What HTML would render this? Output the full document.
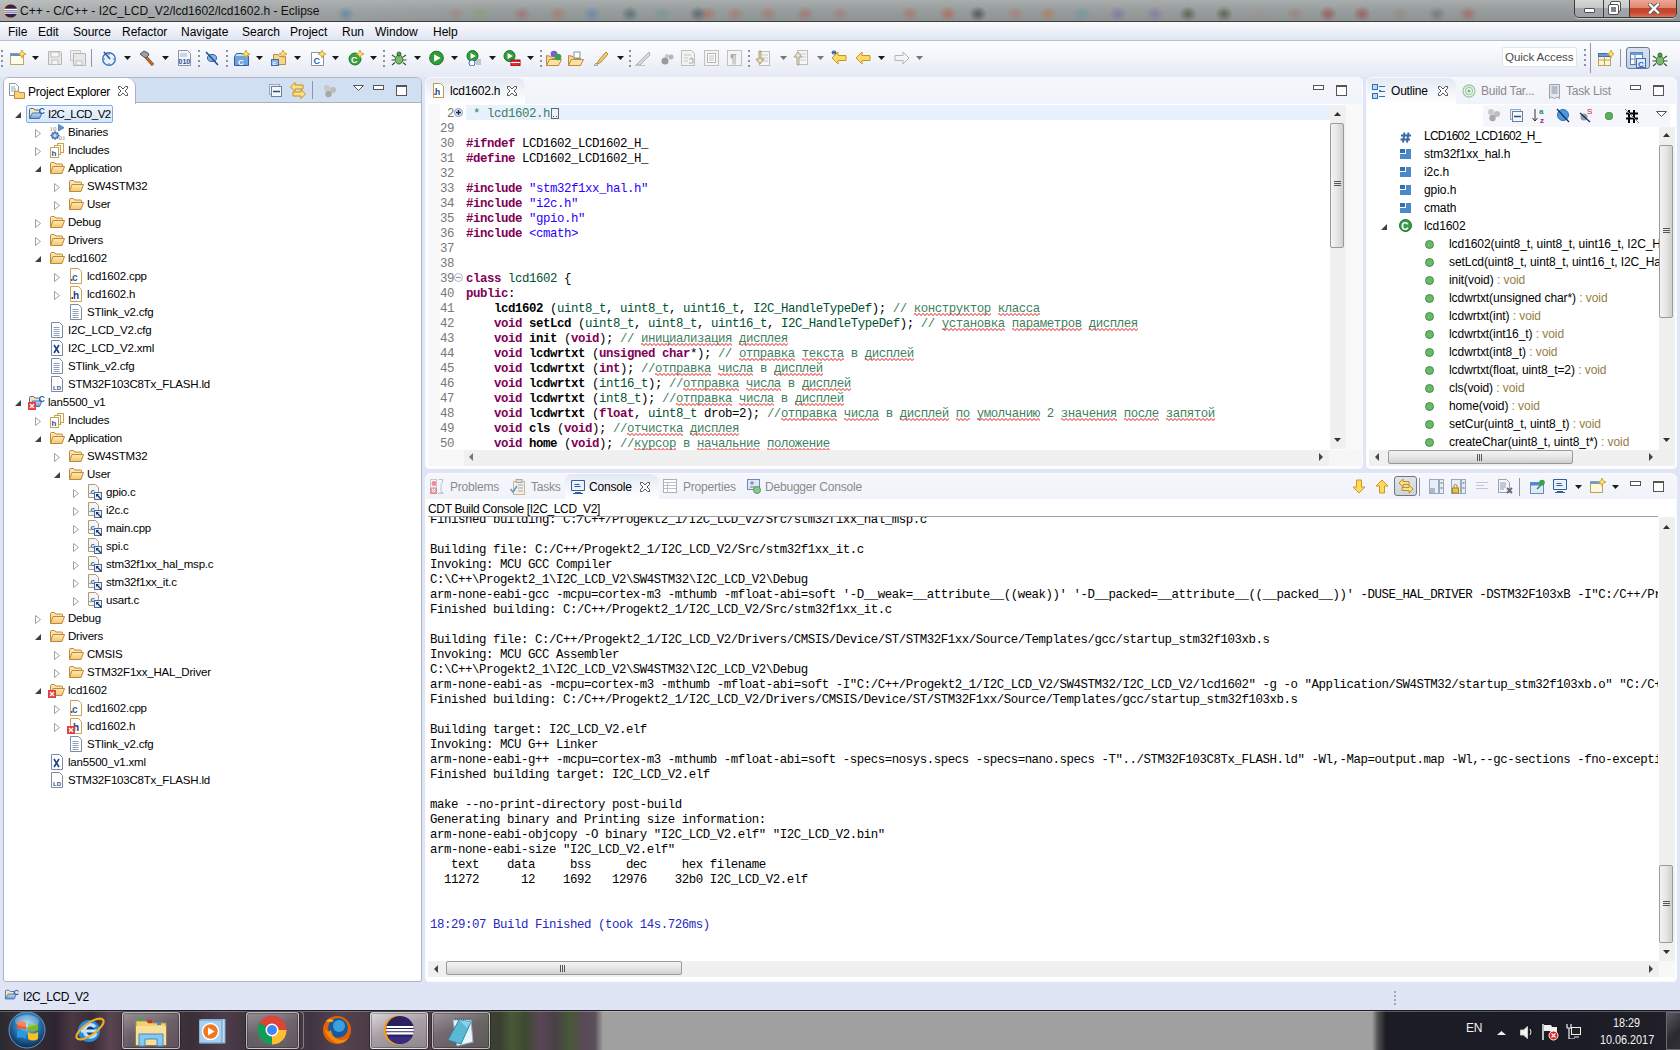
<!DOCTYPE html><html><head><meta charset="utf-8"><style>
*{box-sizing:border-box}
html,body{margin:0;padding:0}
body{width:1680px;height:1050px;position:relative;overflow:hidden;background:#e0e5f6;font-family:"Liberation Sans",sans-serif;font-size:12px;color:#000}
.a{position:absolute}
.t{position:absolute;white-space:pre;line-height:14px}
.ui{font-size:11.5px;letter-spacing:-0.2px}
.mono{font-family:"Liberation Mono",monospace;white-space:pre}
#menu span{position:absolute;top:3px;font-size:12px}
.panel{position:absolute;background:#fff;border:1px solid #a9b0be;border-radius:6px 6px 0 0;overflow:hidden}
.sbv{position:absolute;width:16px;background:#f0f0f0}
.sbh{position:absolute;height:16px;background:#f0f0f0}
.thumbv{position:absolute;left:1px;width:14px;border:1px solid #9a9a9a;border-radius:2px;background:linear-gradient(90deg,#f4f4f4,#e6e6e6 50%,#cfcfcf)}
.thumbh{position:absolute;top:1px;height:14px;border:1px solid #9a9a9a;border-radius:2px;background:linear-gradient(#f4f4f4,#e6e6e6 50%,#cfcfcf)}
.kw{color:#7f0055;font-weight:bold}
.cm{color:#3f7f5f}
.st{color:#2a00ff}
.ty{color:#005032}
.fn{font-weight:bold}
.sq{background:linear-gradient(45deg,transparent 30%,#f49090 30%,#f49090 62%,transparent 62%) 0 100%/4px 3px repeat-x,linear-gradient(-45deg,transparent 30%,#f49090 30%,#f49090 62%,transparent 62%) 2px 100%/4px 3px repeat-x}
</style></head><body>
<svg width="0" height="0" style="position:absolute">
<defs>
<linearGradient id="gFold" x1="0" y1="0" x2="0" y2="1"><stop offset="0" stop-color="#fdebb8"/><stop offset="1" stop-color="#f2c66c"/></linearGradient>
<linearGradient id="gBlue" x1="0" y1="0" x2="0" y2="1"><stop offset="0" stop-color="#c6dcf6"/><stop offset="1" stop-color="#6d9bd8"/></linearGradient>
<symbol id="folder" viewBox="0 0 16 16">
 <path d="M1.5 13.5 v-10 q0 -1 1 -1 h3 l1.5 1.5 h5.5 q1 0 1 1 v1.5" fill="#fbe3a6" stroke="#c0883a"/>
 <path d="M1.5 13.5 l2.5 -7 h11.5 l-2.5 7z" fill="url(#gFold)" stroke="#c0883a" stroke-linejoin="round"/>
</symbol>
<symbol id="projfolder" viewBox="0 0 16 16">
 <path d="M0.5 12.5 v-9 q0 -1 1 -1 h3 l1.5 1.5 h4.5 v3" fill="#fbe6a8" stroke="#3d6fb5"/>
 <path d="M0.5 12.5 l3 -5.5 h9.5 l-2.5 5.5z" fill="url(#gBlue)" stroke="#3d6fb5" stroke-linejoin="round"/>
 <text x="9.8" y="7.5" font-family="Liberation Sans" font-weight="bold" font-size="8.5" fill="#2b5fa8">C</text>
</symbol>
<symbol id="filec" viewBox="0 0 16 16">
 <path d="M2.5 0.5 h8 l3 3 v12 h-11z" fill="#fff" stroke="#c9a34f"/>
 <text x="4" y="13" font-family="Liberation Sans" font-weight="bold" font-size="10" fill="#2f5fa8">c</text>
 <rect x="3" y="11" width="1.5" height="2" fill="#2f5fa8"/>
</symbol>
<symbol id="fileh" viewBox="0 0 16 16">
 <path d="M2.5 0.5 h8 l3 3 v12 h-11z" fill="#fff" stroke="#c9a34f"/>
 <text x="5" y="13" font-family="Liberation Sans" font-weight="bold" font-size="10" fill="#1f3f7a">h</text>
 <rect x="3.5" y="11" width="1.5" height="2" fill="#1f3f7a"/>
</symbol>
<symbol id="filetxt" viewBox="0 0 16 16">
 <path d="M2.5 0.5 h8 l3 3 v12 h-11z" fill="#fff" stroke="#7d8aa3"/>
 <path d="M4.5 5.5 h6 M4.5 7.5 h6 M4.5 9.5 h6 M4.5 11.5 h6 M4.5 13.5 h6" stroke="#8fa0bd"/>
</symbol>
<symbol id="filexml" viewBox="0 0 16 16">
 <path d="M2.5 0.5 h8 l3 3 v12 h-11z" fill="#fff" stroke="#7d8aa3"/>
 <path d="M5 5 l5 8 M10 5 l-5 8" stroke="#1b3f8c" stroke-width="1.6"/>
</symbol>
<symbol id="fileld" viewBox="0 0 16 16">
 <path d="M2.5 0.5 h8 l3 3 v12 h-11z" fill="#fff" stroke="#7d8aa3"/>
 <text x="4" y="14" font-family="Liberation Sans" font-weight="bold" font-size="6" fill="#2f4f8a">LD</text>
</symbol>
<symbol id="filelink" viewBox="0 0 16 16">
 <path d="M1.5 0.5 h7 l3 3 v10 h-10z" fill="#f2f6fb" stroke="#b39a68"/>
 <text x="3.5" y="10" font-family="Liberation Sans" font-weight="bold" font-size="8" fill="#3a6aa8">c</text>
 <rect x="2.5" y="9" width="1" height="1" fill="#2a4a7a"/>
 <rect x="7.5" y="8.5" width="7" height="7" fill="#e4ecf6" stroke="#4a6a9a"/>
 <path d="M9.5 10.5 L14 15" stroke="#1a3060" stroke-width="1.2"/>
 <path d="M9 10 h3 l-3 3z" fill="#1a3060"/>
</symbol>
<symbol id="binaries" viewBox="0 0 16 16">
 <text x="0.5" y="6.5" font-family="Liberation Serif" font-size="7" fill="#8a8a8a">10</text>
 <path d="M9.5 0.5 l5.5 3.2 l-5.5 3.2z" fill="#5c94d6" stroke="#3a6fb8" stroke-width="0.8"/>
 <path d="M6 7.5 l1 1.6 l1.8 -0.4 l0 1.8 l1.6 1 l-1.6 1 l0 1.8 l-1.8 -0.4 l-1 1.6 l-1 -1.6 l-1.8 0.4 l0 -1.8 l-1.6 -1 l1.6 -1 l0 -1.8 l1.8 0.4z" fill="#6f9fd4" stroke="#2f5a90" stroke-width="0.9"/>
 <circle cx="6" cy="11.5" r="1.5" fill="#cfe0f4"/>
 <text x="9.5" y="16" font-family="Liberation Serif" font-size="7" fill="#8a8a8a">01</text>
</symbol>
<symbol id="includes" viewBox="0 0 16 16">
 <rect x="8.5" y="1.5" width="6" height="9" fill="#fff" stroke="#c9a34f"/>
 <rect x="5.5" y="3.5" width="6" height="9" fill="#fff" stroke="#c9a34f"/>
 <rect x="1.5" y="5.5" width="8" height="10" fill="#fff" stroke="#c9a34f"/>
 <text x="2.5" y="14" font-family="Liberation Sans" font-weight="bold" font-size="8" fill="#1f4f9a">h</text>
</symbol>
<symbol id="errx" viewBox="0 0 8 8">
 <rect x="0" y="0" width="8" height="8" fill="#e04040"/>
 <path d="M2 2 l4 4 M6 2 l-4 4" stroke="#fff" stroke-width="1.3"/>
</symbol>
</defs></svg>
<div class="a" style="left:0;top:0;width:1680px;height:22px;background:radial-gradient(ellipse 9px 8px at 346px 14px,rgba(70,120,170,.55),transparent),radial-gradient(ellipse 9px 8px at 455px 14px,rgba(170,110,110,.35),transparent),radial-gradient(ellipse 9px 8px at 480px 14px,rgba(120,170,80,.45),transparent),radial-gradient(ellipse 9px 8px at 522px 14px,rgba(180,80,80,.45),transparent),radial-gradient(ellipse 9px 8px at 558px 14px,rgba(190,100,70,.45),transparent),radial-gradient(ellipse 9px 8px at 592px 14px,rgba(70,120,190,.5),transparent),radial-gradient(ellipse 9px 8px at 630px 14px,rgba(40,80,90,.5),transparent),radial-gradient(ellipse 9px 8px at 662px 14px,rgba(90,150,150,.4),transparent),radial-gradient(ellipse 9px 8px at 698px 14px,rgba(50,70,90,.55),transparent),radial-gradient(ellipse 9px 8px at 708px 14px,rgba(190,90,60,.45),transparent),radial-gradient(ellipse 9px 8px at 735px 14px,rgba(190,90,80,.4),transparent),radial-gradient(ellipse 9px 8px at 768px 14px,rgba(190,90,80,.4),transparent),radial-gradient(ellipse 9px 8px at 805px 14px,rgba(180,80,70,.4),transparent),radial-gradient(ellipse 9px 8px at 840px 14px,rgba(180,90,80,.35),transparent),radial-gradient(ellipse 9px 8px at 910px 14px,rgba(190,90,70,.45),transparent),radial-gradient(ellipse 9px 8px at 948px 14px,rgba(190,90,60,.6),transparent),radial-gradient(ellipse 9px 8px at 978px 14px,rgba(50,50,50,.6),transparent),radial-gradient(ellipse 9px 8px at 1015px 14px,rgba(190,100,90,.4),transparent),radial-gradient(ellipse 9px 8px at 1048px 14px,rgba(190,110,60,.5),transparent),radial-gradient(ellipse 9px 8px at 1082px 14px,rgba(90,150,170,.45),transparent),radial-gradient(ellipse 9px 8px at 1118px 14px,rgba(120,100,170,.55),transparent),radial-gradient(ellipse 9px 8px at 1155px 14px,rgba(120,100,170,.5),transparent),radial-gradient(ellipse 9px 8px at 1188px 14px,rgba(60,70,40,.6),transparent),radial-gradient(ellipse 9px 8px at 1224px 14px,rgba(60,70,40,.6),transparent),radial-gradient(ellipse 9px 8px at 1260px 14px,rgba(170,140,140,.3),transparent),radial-gradient(ellipse 9px 8px at 1295px 14px,rgba(170,100,90,.35),transparent),radial-gradient(ellipse 9px 8px at 1328px 14px,rgba(160,60,60,.6),transparent),radial-gradient(ellipse 9px 8px at 1362px 14px,rgba(160,60,60,.6),transparent),radial-gradient(ellipse 9px 8px at 1400px 14px,rgba(150,120,100,.3),transparent),radial-gradient(ellipse 9px 8px at 1437px 14px,rgba(80,80,80,.4),transparent),radial-gradient(ellipse 9px 8px at 1468px 14px,rgba(170,80,70,.55),transparent),linear-gradient(90deg,rgba(255,255,255,0.22),rgba(255,255,255,0.08) 300px,transparent 500px),linear-gradient(#a8acac,#979c9c 50%,#8e9393);border-bottom:1px solid #3a3d3d;box-shadow:0 1px 0 #fff"></div><svg class="a" style="left:2px;top:3px" width="16" height="16" viewBox="0 0 16 16"><circle cx="8.3" cy="8" r="7" fill="#f7941d"/><circle cx="8.8" cy="8" r="6.6" fill="#2c2255"/><path d="M2.2 6.3h13.2M2 8.2h13.6M2.2 10.1h13.2" stroke="#fff" stroke-width="1.2"/></svg><div class="t" style="left:20px;top:3.5px;font-size:12px;color:#111">C++ - C/C++ - I2C_LCD_V2/lcd1602/lcd1602.h - Eclipse</div><div class="a" style="left:1574px;top:0;width:103px;height:18px;border:1px solid #3a3c40;border-top:none;border-radius:0 0 5px 5px;overflow:hidden;background:linear-gradient(#d6d8d8,#c8caca 44%,#a4a8ac 45%,#9ea2a8 100%);box-shadow:0 1px 0 rgba(255,255,255,0.5)"><div class="a" style="left:28px;top:0;width:1px;height:18px;background:#3a3c40"></div><div class="a" style="left:54px;top:0;width:1px;height:18px;background:#3a3c40"></div><div class="a" style="left:55px;top:0;width:48px;height:18px;background:linear-gradient(#eca898,#e08670 44%,#c4432a 45%,#c84a30 70%,#dc7a62)"></div><div class="a" style="left:9px;top:8px;width:11px;height:5px;background:#fff;border:1px solid #505050;border-radius:1px"></div><div class="a" style="left:36px;top:2px;width:9px;height:9px;border:2px solid #fff;outline:1px solid #505050;border-radius:1px"></div><div class="a" style="left:34px;top:5px;width:9px;height:9px;border:2px solid #fff;background:#808488;outline:1px solid #505050;border-radius:1px"></div><svg class="a" style="left:73px;top:3px" width="12" height="11"><path d="M2 1.5 L10 9.5 M10 1.5 L2 9.5" stroke="#5a5a5a" stroke-width="4.2" stroke-linecap="square"/><path d="M2 1.5 L10 9.5 M10 1.5 L2 9.5" stroke="#fff" stroke-width="2.4" stroke-linecap="square"/></svg></div><div id="menu" class="a" style="left:0;top:22px;width:1680px;height:19px;background:linear-gradient(#fafbfd,#eef1f8 45%,#dfe5f2);border-bottom:1px solid #b7bfcf"><span style="left:8px">File</span><span style="left:38px">Edit</span><span style="left:73px">Source</span><span style="left:122px">Refactor</span><span style="left:181px">Navigate</span><span style="left:242px">Search</span><span style="left:290px">Project</span><span style="left:342px">Run</span><span style="left:375px">Window</span><span style="left:433px">Help</span></div><div class="a" style="left:0;top:41px;width:1680px;height:36px;background:linear-gradient(#fcfdfe,#f2f4fa 50%,#e4e9f5)"></div><svg class="a" style="left:1px;top:49px" width="2" height="18" viewBox="0 0 2 18"><path d="M1 1v2M1 6v2M1 11v2M1 16v2" stroke="#8a93a6" stroke-width="2"/></svg><svg class="a" style="left:10px;top:50px" width="16" height="16" viewBox="0 0 16 16"><rect x="0.5" y="3.5" width="13" height="11" fill="#fffbe8" stroke="#bfa56a"/><rect x="0.5" y="3.5" width="13" height="2.5" fill="#5a8fd0"/><path d="M12 0 l1.2 2.8 l2.8 1.2 l-2.8 1.2 l-1.2 2.8 l-1.2 -2.8 l-2.8 -1.2 l2.8 -1.2z" fill="#ffe27a" stroke="#c79a20" stroke-width="0.8"/></svg><svg class="a" style="left:32px;top:56px" width="7" height="4" viewBox="0 0 7 4"><path d="M0 0h7l-3.5 4z" fill="#1a1a1a"/></svg><svg class="a" style="left:47px;top:50px" width="16" height="16" viewBox="0 0 16 16"><path d="M1.5 1.5h12l1 1v12h-13z" fill="#e8e8e8" stroke="#b5b5b5"/><rect x="4" y="2" width="8" height="5" fill="#f6f6f6" stroke="#c0c0c0"/><rect x="5" y="10" width="6" height="4.5" fill="#f6f6f6" stroke="#c0c0c0"/></svg><svg class="a" style="left:70px;top:50px" width="16" height="16" viewBox="0 0 16 16"><path d="M0.5 0.5h10v10h-10z" fill="#eee" stroke="#c5c5c5"/><path d="M3.5 3.5h12v12h-12z" fill="#e8e8e8" stroke="#b5b5b5"/><rect x="6" y="11" width="6" height="4" fill="#f6f6f6" stroke="#c0c0c0"/></svg><div class="a" style="left:91px;top:49px;width:1px;height:18px;background:#8f97a6"></div><svg class="a" style="left:101px;top:50px" width="16" height="16" viewBox="0 0 16 16"><circle cx="8" cy="9" r="6.3" fill="#eaf2fb" stroke="#3a78b8" stroke-width="1.4"/><path d="M8 3.5v1.5M8 13v1.5M2.5 9h1.5M12 9h1.5" stroke="#3a78b8"/><path d="M3 2 L9 9" stroke="#3a5f9a" stroke-width="1.8"/></svg><svg class="a" style="left:124px;top:56px" width="7" height="4" viewBox="0 0 7 4"><path d="M0 0h7l-3.5 4z" fill="#1a1a1a"/></svg><svg class="a" style="left:139px;top:50px" width="16" height="16" viewBox="0 0 16 16"><path d="M6 6 L14 15" stroke="#8a4a1c" stroke-width="3.2"/><path d="M6 6 L14 15" stroke="#c8783a" stroke-width="1.4"/><path d="M1 4 l4 -3 l4 2 l1 2 l-3 3 l-2 -1z" fill="#9aa0a8" stroke="#555"/></svg><svg class="a" style="left:162px;top:56px" width="7" height="4" viewBox="0 0 7 4"><path d="M0 0h7l-3.5 4z" fill="#1a1a1a"/></svg><svg class="a" style="left:178px;top:50px" width="14" height="16" viewBox="0 0 14 16"><path d="M0.5 0.5h9l3 3v12h-12z" fill="#f4f6fb" stroke="#8a93a6"/><text x="0.5" y="14" font-size="7" font-family="Liberation Sans" font-weight="bold" fill="#2a4f8a">010</text><path d="M2 4h7M2 6h7" stroke="#9fb3d0"/></svg><svg class="a" style="left:198px;top:49px" width="2" height="18" viewBox="0 0 2 18"><path d="M1 1v2M1 6v2M1 11v2M1 16v2" stroke="#8a93a6" stroke-width="2"/></svg><svg class="a" style="left:205px;top:50px" width="14" height="16" viewBox="0 0 14 16"><ellipse cx="7" cy="8" rx="4.5" ry="3.5" fill="#8fb4e0" stroke="#2a5fa0"/><path d="M1 2 L13 15" stroke="#1e4f90" stroke-width="1.6"/></svg><svg class="a" style="left:226px;top:49px" width="2" height="18" viewBox="0 0 2 18"><path d="M1 1v2M1 6v2M1 11v2M1 16v2" stroke="#8a93a6" stroke-width="2"/></svg><svg class="a" style="left:234px;top:50px" width="16" height="16" viewBox="0 0 16 16"><path d="M0.5 6.5h14v9h-14z" fill="#6fa2e0" stroke="#2b5fa8"/><path d="M0.5 6.5l2 -3h10l2 3" fill="#c9ddf6" stroke="#2b5fa8"/><text x="4" y="14.5" font-size="8" font-weight="bold" font-family="Liberation Sans" fill="#fff">C</text><path d="M12 0 l1.2 2.8 l2.8 1.2 l-2.8 1.2 l-1.2 2.8 l-1.2 -2.8 l-2.8 -1.2 l2.8 -1.2z" fill="#ffe27a" stroke="#c79a20" stroke-width="0.8"/></svg><svg class="a" style="left:256px;top:56px" width="7" height="4" viewBox="0 0 7 4"><path d="M0 0h7l-3.5 4z" fill="#1a1a1a"/></svg><svg class="a" style="left:271px;top:50px" width="16" height="16" viewBox="0 0 16 16"><path d="M2.5 4.5v10h12v-8h-6l-1.5 -2z" fill="#f5d68c" stroke="#c08a3c"/><rect x="0.5" y="9.5" width="7" height="6" fill="#8fb6e6" stroke="#3a6fb8"/><text x="1.5" y="15" font-size="6" font-weight="bold" font-family="Liberation Sans" fill="#fff">c</text><path d="M12 0 l1.2 2.8 l2.8 1.2 l-2.8 1.2 l-1.2 2.8 l-1.2 -2.8 l-2.8 -1.2 l2.8 -1.2z" fill="#ffe27a" stroke="#c79a20" stroke-width="0.8"/></svg><svg class="a" style="left:294px;top:56px" width="7" height="4" viewBox="0 0 7 4"><path d="M0 0h7l-3.5 4z" fill="#1a1a1a"/></svg><svg class="a" style="left:311px;top:50px" width="16" height="16" viewBox="0 0 16 16"><path d="M0.5 2.5h9l3 3v10h-12z" fill="#fff" stroke="#8a93a6"/><text x="2.5" y="13.5" font-size="9" font-weight="bold" font-family="Liberation Sans" fill="#2b5fb8">C</text><path d="M11 0 l1.2 2.8 l2.8 1.2 l-2.8 1.2 l-1.2 2.8 l-1.2 -2.8 l-2.8 -1.2 l2.8 -1.2z" fill="#ffe27a" stroke="#c79a20" stroke-width="0.8"/></svg><svg class="a" style="left:332px;top:56px" width="7" height="4" viewBox="0 0 7 4"><path d="M0 0h7l-3.5 4z" fill="#1a1a1a"/></svg><svg class="a" style="left:348px;top:50px" width="16" height="16" viewBox="0 0 16 16"><circle cx="7" cy="9" r="6" fill="#3aa040" stroke="#1f7a2a"/><text x="3" y="13" font-size="9" font-weight="bold" font-family="Liberation Sans" fill="#fff">C</text><path d="M12 0 l1.2 2.8 l2.8 1.2 l-2.8 1.2 l-1.2 2.8 l-1.2 -2.8 l-2.8 -1.2 l2.8 -1.2z" fill="#ffe27a" stroke="#c79a20" stroke-width="0.8"/></svg><svg class="a" style="left:370px;top:56px" width="7" height="4" viewBox="0 0 7 4"><path d="M0 0h7l-3.5 4z" fill="#1a1a1a"/></svg><svg class="a" style="left:383px;top:49px" width="2" height="18" viewBox="0 0 2 18"><path d="M1 1v2M1 6v2M1 11v2M1 16v2" stroke="#8a93a6" stroke-width="2"/></svg><svg class="a" style="left:391px;top:50px" width="16" height="16" viewBox="0 0 16 16"><ellipse cx="8" cy="9.5" rx="3.8" ry="4.5" fill="#7cb870" stroke="#2f6a2a"/><circle cx="8" cy="4" r="2" fill="#5a9a50" stroke="#2f6a2a"/><path d="M4 7l-3 -2M4 10h-3.5M4 12.5l-3 2.5M12 7l3 -2M12 10h3.5M12 12.5l3 2.5" stroke="#2f5a2a" stroke-width="1.1"/></svg><svg class="a" style="left:414px;top:56px" width="7" height="4" viewBox="0 0 7 4"><path d="M0 0h7l-3.5 4z" fill="#1a1a1a"/></svg><svg class="a" style="left:429px;top:50px" width="16" height="16" viewBox="0 0 16 16"><circle cx="7.5" cy="8" r="6.8" fill="#2e9e3a" stroke="#1d6e26"/><path d="M5.12 4.26 L11.58 8 L5.12 11.74z" fill="#fff"/></svg><svg class="a" style="left:451px;top:56px" width="7" height="4" viewBox="0 0 7 4"><path d="M0 0h7l-3.5 4z" fill="#1a1a1a"/></svg><svg class="a" style="left:466px;top:50px" width="16" height="16" viewBox="0 0 16 16"><circle cx="6.5" cy="6" r="5.5" fill="#2e9e3a" stroke="#1d6e26"/><path d="M4.575 2.9749999999999996 L9.8 6 L4.575 9.025z" fill="#fff"/><circle cx="6" cy="13" r="3" fill="#fff" stroke="#3a6fb8"/><path d="M10 10h5M10 12h5M10 14h5" stroke="#8a9ab0"/></svg><svg class="a" style="left:489px;top:56px" width="7" height="4" viewBox="0 0 7 4"><path d="M0 0h7l-3.5 4z" fill="#1a1a1a"/></svg><svg class="a" style="left:503px;top:50px" width="18" height="16" viewBox="0 0 18 16"><circle cx="6.5" cy="6" r="5.5" fill="#2e9e3a" stroke="#1d6e26"/><path d="M4.575 2.9749999999999996 L9.8 6 L4.575 9.025z" fill="#fff"/><rect x="8" y="10" width="9" height="6" fill="#e03030" stroke="#8a1010"/><path d="M8 12.5h9" stroke="#fff"/></svg><svg class="a" style="left:527px;top:56px" width="7" height="4" viewBox="0 0 7 4"><path d="M0 0h7l-3.5 4z" fill="#1a1a1a"/></svg><svg class="a" style="left:540px;top:49px" width="2" height="18" viewBox="0 0 2 18"><path d="M1 1v2M1 6v2M1 11v2M1 16v2" stroke="#8a93a6" stroke-width="2"/></svg><svg class="a" style="left:546px;top:50px" width="16" height="16" viewBox="0 0 16 16"><path d="M0.5 5.5v10h12v-7h-6l-1.5 -2z" fill="#f5d68c" stroke="#c08a3c"/><path d="M0.5 15.5l3 -6h12l-3 6z" fill="#fbe2a0" stroke="#c08a3c"/><circle cx="8" cy="4" r="3.3" fill="#7a5fc8"/><circle cx="12" cy="7" r="3.3" fill="#3aa050"/></svg><svg class="a" style="left:568px;top:50px" width="16" height="16" viewBox="0 0 16 16"><path d="M0.5 5.5v10h12v-7h-6l-1.5 -2z" fill="#f5d68c" stroke="#c08a3c"/><rect x="6" y="2" width="6" height="6" fill="#fff" stroke="#8a93a6"/><path d="M0.5 15.5l3 -6h12l-3 6z" fill="#fbe2a0" stroke="#c08a3c"/></svg><svg class="a" style="left:593px;top:50px" width="16" height="16" viewBox="0 0 16 16"><path d="M3 15 L6 10 L13 2 L15 4 L8 12z" fill="#f4d070" stroke="#b08830"/><path d="M1 16 L3 13 L5 15z" fill="#fff3c0" stroke="#999"/></svg><svg class="a" style="left:617px;top:56px" width="7" height="4" viewBox="0 0 7 4"><path d="M0 0h7l-3.5 4z" fill="#1a1a1a"/></svg><svg class="a" style="left:629px;top:49px" width="2" height="18" viewBox="0 0 2 18"><path d="M1 1v2M1 6v2M1 11v2M1 16v2" stroke="#8a93a6" stroke-width="2"/></svg><svg class="a" style="left:635px;top:50px" width="16" height="16" viewBox="0 0 16 16"><path d="M1 15 L14 2 L15 5 L5 15z" fill="#d8d8d8" stroke="#b0b0b0"/><path d="M0 15.5h10" stroke="#c0c0c0"/></svg><svg class="a" style="left:660px;top:50px" width="14" height="16" viewBox="0 0 14 16"><circle cx="5" cy="11" r="3.5" fill="#9a9a9a"/><circle cx="11" cy="7" r="2.5" fill="#b5b5b5"/><circle cx="7" cy="6" r="2" fill="#c5c5c5"/></svg><svg class="a" style="left:681px;top:50px" width="16" height="16" viewBox="0 0 16 16"><path d="M0.5 0.5h10l3 3v12h-13z" fill="#f2f2f2" stroke="#bdbdbd"/><path d="M3 5h7M3 8h4M3 11h4" stroke="#c5c5c5"/><path d="M8 9l4 0l-2 -2M12 9v4h-4" stroke="#aaa" fill="none"/></svg><svg class="a" style="left:704px;top:50px" width="16" height="16" viewBox="0 0 16 16"><rect x="0.5" y="0.5" width="14" height="15" fill="#f4f4f4" stroke="#c0c0c0"/><rect x="3.5" y="3.5" width="8" height="9" fill="#fff" stroke="#b5b5b5"/><path d="M5 6h5M5 8h5M5 10h5" stroke="#c0c0c0"/></svg><svg class="a" style="left:727px;top:50px" width="16" height="16" viewBox="0 0 16 16"><rect x="0.5" y="0.5" width="14" height="15" fill="#f4f4f4" stroke="#c0c0c0"/><text x="3" y="13" font-size="12" font-weight="bold" font-family="Liberation Sans" fill="#aaa">¶</text></svg><svg class="a" style="left:748px;top:49px" width="2" height="18" viewBox="0 0 2 18"><path d="M1 1v2M1 6v2M1 11v2M1 16v2" stroke="#8a93a6" stroke-width="2"/></svg><svg class="a" style="left:755px;top:50px" width="16" height="16" viewBox="0 0 16 16"><rect x="4.5" y="1.5" width="10" height="14" fill="#f6f6f6" stroke="#bdbdbd"/><path d="M7 5h6M7 8h6M7 11h6" stroke="#c9c9c9"/><path d="M4 1v8h-3l4 5l4 -5h-3v-8z" fill="#e8dcc0" stroke="#a89a70"/></svg><svg class="a" style="left:780px;top:56px" width="7" height="4" viewBox="0 0 7 4"><path d="M0 0h7l-3.5 4z" fill="#777"/></svg><svg class="a" style="left:793px;top:50px" width="16" height="16" viewBox="0 0 16 16"><rect x="4.5" y="0.5" width="10" height="14" fill="#f6f6f6" stroke="#bdbdbd"/><path d="M7 4h6M7 7h6M7 10h6" stroke="#c9c9c9"/><path d="M4 15v-8h-3l4 -5l4 5h-3v8z" fill="#e8e0d0" stroke="#a8a090"/></svg><svg class="a" style="left:817px;top:56px" width="7" height="4" viewBox="0 0 7 4"><path d="M0 0h7l-3.5 4z" fill="#777"/></svg><svg class="a" style="left:831px;top:50px" width="16" height="16" viewBox="0 0 16 16"><path d="M1 8 L7 2 V5.5 H15 V10.5 H7 V14z" fill="#ffd86a" stroke="#c89a20"/><path d="M3 0v5M0.5 2.5h5M1 1l4 3M5 1l-4 3" stroke="#2a4fa0" stroke-width="0.9"/></svg><svg class="a" style="left:855px;top:50px" width="16" height="16" viewBox="0 0 16 16"><path d="M1 8 L7 2 V5.5 H15 V10.5 H7 V14z" fill="#ffd86a" stroke="#c89a20"/></svg><svg class="a" style="left:878px;top:56px" width="7" height="4" viewBox="0 0 7 4"><path d="M0 0h7l-3.5 4z" fill="#1a1a1a"/></svg><svg class="a" style="left:894px;top:50px" width="16" height="16" viewBox="0 0 16 16"><path d="M15 8 L9 2 V5.5 H1 V10.5 H9 V14z" fill="#f5f5f5" stroke="#b5b5b5"/></svg><svg class="a" style="left:916px;top:56px" width="7" height="4" viewBox="0 0 7 4"><path d="M0 0h7l-3.5 4z" fill="#777"/></svg><div class="a" style="left:1502px;top:47px;width:75px;height:20px;background:#fff;border:1px solid #dfe3ea;border-radius:2px"></div><div class="t" style="left:1505px;top:50px;font-size:11.6px;color:#4a4a4a;letter-spacing:-0.1px">Quick Access</div><svg class="a" style="left:1584px;top:48px" width="2" height="18" viewBox="0 0 2 18"><path d="M1 1v2M1 6v2M1 11v2M1 16v2" stroke="#8a93a6" stroke-width="2"/></svg><div class="a" style="left:1590px;top:43px;width:1px;height:30px;background:#8f97a6"></div><svg class="a" style="left:1598px;top:50px" width="16" height="16" viewBox="0 0 16 16"><rect x="0.5" y="3.5" width="12" height="12" fill="#fff3d0" stroke="#c0a060"/><rect x="0.5" y="3.5" width="12" height="3" fill="#6a9ad8" stroke="#3a6fb8"/><path d="M0.5 10h12M6.5 6.5v9" stroke="#c0a060"/><path d="M13 0 l1.2 2.8 l2.8 1.2 l-2.8 1.2 l-1.2 2.8 l-1.2 -2.8 l-2.8 -1.2 l2.8 -1.2z" fill="#ffe27a" stroke="#c79a20" stroke-width="0.8"/></svg><div class="a" style="left:1620px;top:49px;width:1px;height:18px;background:#8f97a6"></div><div class="a" style="left:1626px;top:47px;width:24px;height:22px;border:1px solid #6a7a90;border-radius:3px;background:linear-gradient(#d8e2f0,#c5d2e6)"></div><svg class="a" style="left:1630px;top:52px" width="16" height="16" viewBox="0 0 16 16"><rect x="0.5" y="0.5" width="12" height="12" fill="#fff" stroke="#5a7ab0"/><rect x="0.5" y="0.5" width="12" height="2.5" fill="#6a9ad8"/><path d="M5 3v9M0.5 7h4" stroke="#5a7ab0"/><rect x="6.5" y="6.5" width="9" height="9" fill="#dfeaf8" stroke="#3a6fb8"/><text x="8" y="14.5" font-size="8" font-weight="bold" font-family="Liberation Sans" fill="#2a5fb0">C</text></svg><svg class="a" style="left:1652px;top:51px" width="16" height="16" viewBox="0 0 16 16"><ellipse cx="8" cy="9.5" rx="3.8" ry="4.5" fill="#7cb870" stroke="#2f6a2a"/><circle cx="8" cy="4" r="2" fill="#5a9a50" stroke="#2f6a2a"/><path d="M4 7l-3 -2M4 10h-3.5M4 12.5l-3 2.5M12 7l3 -2M12 10h3.5M12 12.5l3 2.5" stroke="#2f5a2a" stroke-width="1.1"/></svg><div class="a" style="left:3px;top:77px;width:419px;height:905px;background:#fff;border:1px solid #aeb4c2;border-radius:6px 6px 2px 3px"></div><div class="a" style="left:4px;top:78px;width:417px;height:25px;background:#d0dff1;border-radius:5px 5px 0 0;border-bottom:1px solid #a9b0be"></div><div class="a" style="left:4px;top:78px;width:132px;height:26px;background:#fff;border-radius:5px 9px 0 0;border-right:1px solid #a9b0be"></div><svg class="a" style="left:9px;top:83px" width="16" height="16" viewBox="0 0 16 16"><path d="M0.5 0.5h6l3 3v9h-9z" fill="#fff" stroke="#8a93a6"/><path d="M2 4h4M2 6h5M2 8h5" stroke="#9ab"/><path d="M5.5 8.5v7h10v-6h-5l-1 -1.5z" fill="#f9d27a" stroke="#c08a3c"/></svg><div class="t ui" style="left:28px;top:84.5px;font-size:12px">Project Explorer</div><svg class="a" style="left:117px;top:85px" width="12" height="12" viewBox="0 0 12 12"><path d="M1.5 1.5h2l2.5 2.5l2.5 -2.5h2v2l-2.5 2.5l2.5 2.5v2h-2l-2.5 -2.5l-2.5 2.5h-2v-2l2.5 -2.5l-2.5 -2.5z" fill="#fff" stroke="#4a4a4a" stroke-width="0.95"/></svg><svg class="a" style="left:269px;top:84px" width="14" height="14" viewBox="0 0 14 14"><rect x="0.5" y="0.5" width="10" height="10" fill="#e8f0fa" stroke="#98a8c0"/><rect x="2.5" y="2.5" width="10" height="10" fill="#f4f8fd" stroke="#6a80a0"/><path d="M4 7.5h7" stroke="#1f4f8a" stroke-width="1.5"/></svg><svg class="a" style="left:290px;top:82px" width="16" height="17" viewBox="0 0 16 17"><path d="M0.5 5 L5 0.5 V3 H13 V7 H5 V9.5z" fill="#ffe080" stroke="#c09020"/><path d="M15.5 12 L11 7.5 V10 H3 V14 H11 V16.5z" fill="#ffe080" stroke="#c09020"/></svg><div class="a" style="left:312px;top:81px;width:1px;height:18px;background:#8f97a6"></div><svg class="a" style="left:323px;top:84px" width="14" height="14" viewBox="0 0 14 14"><circle cx="4" cy="4" r="3" fill="#c8c8c8"/><circle cx="10" cy="6" r="3" fill="#bdbdbd"/><circle cx="5.5" cy="10" r="3.2" fill="#a8a8a8"/></svg><svg class="a" style="left:353px;top:85px" width="11" height="7" viewBox="0 0 11 7"><path d="M0.5 0.5h10l-5 5z" fill="#fff" stroke="#555"/></svg><div class="a" style="left:373px;top:85px;width:11px;height:5px;border:1.5px solid #555;background:#fff"></div><div class="a" style="left:396px;top:85px;width:11px;height:11px;border:1.5px solid #555;border-top-width:2.5px;background:#fff"></div><div class="a" style="left:26px;top:105px;width:87px;height:18px;border:1px solid #84acdd;border-radius:2px;background:linear-gradient(#eef5fd,#d5e6fb)"></div><svg class="a" style="left:15px;top:112px" width="7" height="7" viewBox="0 0 7 7"><path d="M6 0 L6 6 L0 6z" fill="#404040"/></svg><svg class="a" style="left:29px;top:106px" width="16" height="16"><use href="#projfolder"/></svg><div class="t ui" style="left:48px;top:107px;letter-spacing:-0.5px">I2C_LCD_V2</div><svg class="a" style="left:35px;top:129px" width="6" height="9" viewBox="0 0 6 9"><path d="M0.5 0.5 L5.5 4.5 L0.5 8.5z" fill="#fff" stroke="#a0a0a0"/></svg><svg class="a" style="left:49px;top:124px" width="16" height="16"><use href="#binaries"/></svg><div class="t ui" style="left:68px;top:125px">Binaries</div><svg class="a" style="left:35px;top:147px" width="6" height="9" viewBox="0 0 6 9"><path d="M0.5 0.5 L5.5 4.5 L0.5 8.5z" fill="#fff" stroke="#a0a0a0"/></svg><svg class="a" style="left:49px;top:142px" width="16" height="16"><use href="#includes"/></svg><div class="t ui" style="left:68px;top:143px">Includes</div><svg class="a" style="left:35px;top:166px" width="7" height="7" viewBox="0 0 7 7"><path d="M6 0 L6 6 L0 6z" fill="#404040"/></svg><svg class="a" style="left:49px;top:160px" width="16" height="16"><use href="#folder"/></svg><div class="t ui" style="left:68px;top:161px">Application</div><svg class="a" style="left:54px;top:183px" width="6" height="9" viewBox="0 0 6 9"><path d="M0.5 0.5 L5.5 4.5 L0.5 8.5z" fill="#fff" stroke="#a0a0a0"/></svg><svg class="a" style="left:68px;top:178px" width="16" height="16"><use href="#folder"/></svg><div class="t ui" style="left:87px;top:179px">SW4STM32</div><svg class="a" style="left:54px;top:201px" width="6" height="9" viewBox="0 0 6 9"><path d="M0.5 0.5 L5.5 4.5 L0.5 8.5z" fill="#fff" stroke="#a0a0a0"/></svg><svg class="a" style="left:68px;top:196px" width="16" height="16"><use href="#folder"/></svg><div class="t ui" style="left:87px;top:197px">User</div><svg class="a" style="left:35px;top:219px" width="6" height="9" viewBox="0 0 6 9"><path d="M0.5 0.5 L5.5 4.5 L0.5 8.5z" fill="#fff" stroke="#a0a0a0"/></svg><svg class="a" style="left:49px;top:214px" width="16" height="16"><use href="#folder"/></svg><div class="t ui" style="left:68px;top:215px">Debug</div><svg class="a" style="left:35px;top:237px" width="6" height="9" viewBox="0 0 6 9"><path d="M0.5 0.5 L5.5 4.5 L0.5 8.5z" fill="#fff" stroke="#a0a0a0"/></svg><svg class="a" style="left:49px;top:232px" width="16" height="16"><use href="#folder"/></svg><div class="t ui" style="left:68px;top:233px">Drivers</div><svg class="a" style="left:35px;top:256px" width="7" height="7" viewBox="0 0 7 7"><path d="M6 0 L6 6 L0 6z" fill="#404040"/></svg><svg class="a" style="left:49px;top:250px" width="16" height="16"><use href="#folder"/></svg><div class="t ui" style="left:68px;top:251px">lcd1602</div><svg class="a" style="left:54px;top:273px" width="6" height="9" viewBox="0 0 6 9"><path d="M0.5 0.5 L5.5 4.5 L0.5 8.5z" fill="#fff" stroke="#a0a0a0"/></svg><svg class="a" style="left:68px;top:268px" width="16" height="16"><use href="#filec"/></svg><div class="t ui" style="left:87px;top:269px">lcd1602.cpp</div><svg class="a" style="left:54px;top:291px" width="6" height="9" viewBox="0 0 6 9"><path d="M0.5 0.5 L5.5 4.5 L0.5 8.5z" fill="#fff" stroke="#a0a0a0"/></svg><svg class="a" style="left:68px;top:286px" width="16" height="16"><use href="#fileh"/></svg><div class="t ui" style="left:87px;top:287px">lcd1602.h</div><svg class="a" style="left:68px;top:304px" width="16" height="16"><use href="#filetxt"/></svg><div class="t ui" style="left:87px;top:305px">STlink_v2.cfg</div><svg class="a" style="left:49px;top:322px" width="16" height="16"><use href="#filetxt"/></svg><div class="t ui" style="left:68px;top:323px">I2C_LCD_V2.cfg</div><svg class="a" style="left:49px;top:340px" width="16" height="16"><use href="#filexml"/></svg><div class="t ui" style="left:68px;top:341px">I2C_LCD_V2.xml</div><svg class="a" style="left:49px;top:358px" width="16" height="16"><use href="#filetxt"/></svg><div class="t ui" style="left:68px;top:359px">STlink_v2.cfg</div><svg class="a" style="left:49px;top:376px" width="16" height="16"><use href="#fileld"/></svg><div class="t ui" style="left:68px;top:377px">STM32F103C8Tx_FLASH.ld</div><svg class="a" style="left:15px;top:400px" width="7" height="7" viewBox="0 0 7 7"><path d="M6 0 L6 6 L0 6z" fill="#404040"/></svg><svg class="a" style="left:29px;top:394px" width="16" height="16"><use href="#projfolder"/></svg><svg class="a" style="left:28px;top:402px" width="8" height="8" viewBox="0 0 8 8"><use href="#errx"/></svg><div class="t ui" style="left:48px;top:395px">lan5500_v1</div><svg class="a" style="left:35px;top:417px" width="6" height="9" viewBox="0 0 6 9"><path d="M0.5 0.5 L5.5 4.5 L0.5 8.5z" fill="#fff" stroke="#a0a0a0"/></svg><svg class="a" style="left:49px;top:412px" width="16" height="16"><use href="#includes"/></svg><div class="t ui" style="left:68px;top:413px">Includes</div><svg class="a" style="left:35px;top:436px" width="7" height="7" viewBox="0 0 7 7"><path d="M6 0 L6 6 L0 6z" fill="#404040"/></svg><svg class="a" style="left:49px;top:430px" width="16" height="16"><use href="#folder"/></svg><div class="t ui" style="left:68px;top:431px">Application</div><svg class="a" style="left:54px;top:453px" width="6" height="9" viewBox="0 0 6 9"><path d="M0.5 0.5 L5.5 4.5 L0.5 8.5z" fill="#fff" stroke="#a0a0a0"/></svg><svg class="a" style="left:68px;top:448px" width="16" height="16"><use href="#folder"/></svg><div class="t ui" style="left:87px;top:449px">SW4STM32</div><svg class="a" style="left:54px;top:472px" width="7" height="7" viewBox="0 0 7 7"><path d="M6 0 L6 6 L0 6z" fill="#404040"/></svg><svg class="a" style="left:68px;top:466px" width="16" height="16"><use href="#folder"/></svg><div class="t ui" style="left:87px;top:467px">User</div><svg class="a" style="left:73px;top:489px" width="6" height="9" viewBox="0 0 6 9"><path d="M0.5 0.5 L5.5 4.5 L0.5 8.5z" fill="#fff" stroke="#a0a0a0"/></svg><svg class="a" style="left:87px;top:484px" width="16" height="16"><use href="#filelink"/></svg><div class="t ui" style="left:106px;top:485px">gpio.c</div><svg class="a" style="left:73px;top:507px" width="6" height="9" viewBox="0 0 6 9"><path d="M0.5 0.5 L5.5 4.5 L0.5 8.5z" fill="#fff" stroke="#a0a0a0"/></svg><svg class="a" style="left:87px;top:502px" width="16" height="16"><use href="#filelink"/></svg><div class="t ui" style="left:106px;top:503px">i2c.c</div><svg class="a" style="left:73px;top:525px" width="6" height="9" viewBox="0 0 6 9"><path d="M0.5 0.5 L5.5 4.5 L0.5 8.5z" fill="#fff" stroke="#a0a0a0"/></svg><svg class="a" style="left:87px;top:520px" width="16" height="16"><use href="#filelink"/></svg><div class="t ui" style="left:106px;top:521px">main.cpp</div><svg class="a" style="left:73px;top:543px" width="6" height="9" viewBox="0 0 6 9"><path d="M0.5 0.5 L5.5 4.5 L0.5 8.5z" fill="#fff" stroke="#a0a0a0"/></svg><svg class="a" style="left:87px;top:538px" width="16" height="16"><use href="#filelink"/></svg><div class="t ui" style="left:106px;top:539px">spi.c</div><svg class="a" style="left:73px;top:561px" width="6" height="9" viewBox="0 0 6 9"><path d="M0.5 0.5 L5.5 4.5 L0.5 8.5z" fill="#fff" stroke="#a0a0a0"/></svg><svg class="a" style="left:87px;top:556px" width="16" height="16"><use href="#filelink"/></svg><div class="t ui" style="left:106px;top:557px">stm32f1xx_hal_msp.c</div><svg class="a" style="left:73px;top:579px" width="6" height="9" viewBox="0 0 6 9"><path d="M0.5 0.5 L5.5 4.5 L0.5 8.5z" fill="#fff" stroke="#a0a0a0"/></svg><svg class="a" style="left:87px;top:574px" width="16" height="16"><use href="#filelink"/></svg><div class="t ui" style="left:106px;top:575px">stm32f1xx_it.c</div><svg class="a" style="left:73px;top:597px" width="6" height="9" viewBox="0 0 6 9"><path d="M0.5 0.5 L5.5 4.5 L0.5 8.5z" fill="#fff" stroke="#a0a0a0"/></svg><svg class="a" style="left:87px;top:592px" width="16" height="16"><use href="#filelink"/></svg><div class="t ui" style="left:106px;top:593px">usart.c</div><svg class="a" style="left:35px;top:615px" width="6" height="9" viewBox="0 0 6 9"><path d="M0.5 0.5 L5.5 4.5 L0.5 8.5z" fill="#fff" stroke="#a0a0a0"/></svg><svg class="a" style="left:49px;top:610px" width="16" height="16"><use href="#folder"/></svg><div class="t ui" style="left:68px;top:611px">Debug</div><svg class="a" style="left:35px;top:634px" width="7" height="7" viewBox="0 0 7 7"><path d="M6 0 L6 6 L0 6z" fill="#404040"/></svg><svg class="a" style="left:49px;top:628px" width="16" height="16"><use href="#folder"/></svg><div class="t ui" style="left:68px;top:629px">Drivers</div><svg class="a" style="left:54px;top:651px" width="6" height="9" viewBox="0 0 6 9"><path d="M0.5 0.5 L5.5 4.5 L0.5 8.5z" fill="#fff" stroke="#a0a0a0"/></svg><svg class="a" style="left:68px;top:646px" width="16" height="16"><use href="#folder"/></svg><div class="t ui" style="left:87px;top:647px">CMSIS</div><svg class="a" style="left:54px;top:669px" width="6" height="9" viewBox="0 0 6 9"><path d="M0.5 0.5 L5.5 4.5 L0.5 8.5z" fill="#fff" stroke="#a0a0a0"/></svg><svg class="a" style="left:68px;top:664px" width="16" height="16"><use href="#folder"/></svg><div class="t ui" style="left:87px;top:665px">STM32F1xx_HAL_Driver</div><svg class="a" style="left:35px;top:688px" width="7" height="7" viewBox="0 0 7 7"><path d="M6 0 L6 6 L0 6z" fill="#404040"/></svg><svg class="a" style="left:49px;top:682px" width="16" height="16"><use href="#folder"/></svg><svg class="a" style="left:48px;top:690px" width="8" height="8" viewBox="0 0 8 8"><use href="#errx"/></svg><div class="t ui" style="left:68px;top:683px">lcd1602</div><svg class="a" style="left:54px;top:705px" width="6" height="9" viewBox="0 0 6 9"><path d="M0.5 0.5 L5.5 4.5 L0.5 8.5z" fill="#fff" stroke="#a0a0a0"/></svg><svg class="a" style="left:68px;top:700px" width="16" height="16"><use href="#filec"/></svg><div class="t ui" style="left:87px;top:701px">lcd1602.cpp</div><svg class="a" style="left:54px;top:723px" width="6" height="9" viewBox="0 0 6 9"><path d="M0.5 0.5 L5.5 4.5 L0.5 8.5z" fill="#fff" stroke="#a0a0a0"/></svg><svg class="a" style="left:68px;top:718px" width="16" height="16"><use href="#fileh"/></svg><svg class="a" style="left:67px;top:726px" width="8" height="8" viewBox="0 0 8 8"><use href="#errx"/></svg><div class="t ui" style="left:87px;top:719px">lcd1602.h</div><svg class="a" style="left:68px;top:736px" width="16" height="16"><use href="#filetxt"/></svg><div class="t ui" style="left:87px;top:737px">STlink_v2.cfg</div><svg class="a" style="left:49px;top:754px" width="16" height="16"><use href="#filexml"/></svg><div class="t ui" style="left:68px;top:755px">lan5500_v1.xml</div><svg class="a" style="left:49px;top:772px" width="16" height="16"><use href="#fileld"/></svg><div class="t ui" style="left:68px;top:773px">STM32F103C8Tx_FLASH.ld</div><div class="a" style="left:425px;top:77px;width:938px;height:392px;background:#fff;border:1px solid #f9fafd;border-radius:6px 6px 4px 4px"></div><div class="a" style="left:426px;top:78px;width:936px;height:26px;background:linear-gradient(#f6f7fb,#f0f3fa);border-radius:5px 5px 0 0"></div><div class="a" style="left:426px;top:78px;width:99px;height:26px;background:linear-gradient(#e3e8f2,#f7f9fc 70%,#fff);border-radius:5px 8px 0 0"></div><svg class="a" style="left:433px;top:83px" width="12" height="16" viewBox="0 0 12 16"><path d="M0.5 0.5h7l3 3v11h-10z" fill="#fff" stroke="#b99a50"/><text x="2" y="12" font-size="8.5" font-weight="bold" font-family="Liberation Sans" fill="#1f3f7a">h</text><rect x="1.3" y="10.5" width="1.3" height="1.5" fill="#1f3f7a"/></svg><div class="t ui" style="left:450px;top:84px;font-size:12px">lcd1602.h</div><svg class="a" style="left:506px;top:85px" width="12" height="12" viewBox="0 0 12 12"><path d="M1.5 1.5h2l2.5 2.5l2.5 -2.5h2v2l-2.5 2.5l2.5 2.5v2h-2l-2.5 -2.5l-2.5 2.5h-2v-2l2.5 -2.5l-2.5 -2.5z" fill="#fff" stroke="#4a4a4a" stroke-width="0.95"/></svg><div class="a" style="left:1313px;top:85px;width:11px;height:5px;border:1.5px solid #555;background:#fff"></div><div class="a" style="left:1336px;top:85px;width:11px;height:11px;border:1.5px solid #555;border-top-width:2.5px;background:#fff"></div><div class="a" style="left:428px;top:104px;width:12px;height:362px;background:#f8f8f8"></div><div class="a" style="left:466px;top:105px;width:864px;height:15px;background:#e8f2fe"></div><div class="a" style="left:1346px;top:104px;width:16px;height:346px;background:#f9f9f9"></div><div class="sbv" style="left:1330px;top:105px;height:344px"></div><svg class="a" style="left:1334px;top:112px" width="7" height="4" viewBox="0 0 7 4"><path d="M0 4h7l-3.5 -4z" fill="#333"/></svg><svg class="a" style="left:1334px;top:438px" width="7" height="4" viewBox="0 0 7 4"><path d="M0 0h7l-3.5 4z" fill="#333"/></svg><div class="thumbv" style="left:1330px;top:123px;height:125px"></div><svg class="a" style="left:1334px;top:181px" width="7" height="6" viewBox="0 0 7 6"><path d="M0 0.5h7M0 2.5h7M0 4.5h7" stroke="#555"/></svg><div class="a" style="left:428px;top:450px;width:36px;height:16px;background:#f8f8f8"></div><div class="sbh" style="left:464px;top:450px;width:865px"></div><svg class="a" style="left:469px;top:453px" width="4" height="8" viewBox="0 0 4 8"><path d="M4 0v8l-4 -4z" fill="#777"/></svg><svg class="a" style="left:1319px;top:453px" width="4" height="8" viewBox="0 0 4 8"><path d="M0 0v8l4 -4z" fill="#444"/></svg><div class="a" style="left:1329px;top:450px;width:33px;height:16px;background:#f6f6f6"></div><div class="a mono" style="left:428px;top:107px;width:26px;font-size:12.4px;letter-spacing:-0.44px;line-height:15px;color:#787878;text-align:right">2<br>29<br>30<br>31<br>32<br>33<br>34<br>35<br>36<br>37<br>38<br>39<br>40<br>41<br>42<br>43<br>44<br>45<br>46<br>47<br>48<br>49<br>50</div><div class="a" style="left:466px;top:104px;width:864px;height:346px;overflow:hidden"><div class="a mono" style="left:0;top:3px;font-size:12.4px;letter-spacing:-0.44px;line-height:15px;color:#000"><span class="cm"> * lcd1602.h</span><span style="display:inline-block;width:8px;height:11px;border:1px solid #666;vertical-align:-2px;margin-left:1px;position:relative"><span style="position:absolute;left:1px;bottom:1px;width:1px;height:1px;background:#555;box-shadow:3px 0 #555"></span></span><br><br><span class="kw">#ifndef</span> LCD1602_LCD1602_H_<br><span class="kw">#define</span> LCD1602_LCD1602_H_<br><br><span class="kw">#include</span> <span class="st">"stm32f1xx_hal.h"</span><br><span class="kw">#include</span> <span class="st">"i2c.h"</span><br><span class="kw">#include</span> <span class="st">"gpio.h"</span><br><span class="kw">#include</span> <span class="st">&lt;cmath&gt;</span><br><br><br><span class="kw">class</span> <span class="ty">lcd1602</span> {<br><span class="kw">public</span>:<br>    <span class="fn">lcd1602</span> (<span class="ty">uint8_t</span>, <span class="ty">uint8_t</span>, <span class="ty">uint16_t</span>, <span class="ty">I2C_HandleTypeDef</span>); <span class="cm">// <span class="sq">конструктор</span> <span class="sq">класса</span></span><br>    <span class="kw">void</span> <span class="fn">setLcd</span> (<span class="ty">uint8_t</span>, <span class="ty">uint8_t</span>, <span class="ty">uint16_t</span>, <span class="ty">I2C_HandleTypeDef</span>); <span class="cm">// <span class="sq">установка</span> <span class="sq">параметров</span> <span class="sq">дисплея</span></span><br>    <span class="kw">void</span> <span class="fn">init</span> (<span class="kw">void</span>); <span class="cm">// <span class="sq">инициализация</span> <span class="sq">дисплея</span></span><br>    <span class="kw">void</span> <span class="fn">lcdwrtxt</span> (<span class="kw">unsigned</span> <span class="kw">char</span>*); <span class="cm">// <span class="sq">отправка</span> <span class="sq">текста</span> в <span class="sq">дисплей</span></span><br>    <span class="kw">void</span> <span class="fn">lcdwrtxt</span> (<span class="kw">int</span>); <span class="cm">//<span class="sq">отправка</span> <span class="sq">числа</span> в <span class="sq">дисплей</span></span><br>    <span class="kw">void</span> <span class="fn">lcdwrtxt</span> (<span class="ty">int16_t</span>); <span class="cm">//<span class="sq">отправка</span> <span class="sq">числа</span> в <span class="sq">дисплей</span></span><br>    <span class="kw">void</span> <span class="fn">lcdwrtxt</span> (<span class="ty">int8_t</span>); <span class="cm">//<span class="sq">отправка</span> <span class="sq">числа</span> в <span class="sq">дисплей</span></span><br>    <span class="kw">void</span> <span class="fn">lcdwrtxt</span> (<span class="kw">float</span>, <span class="ty">uint8_t</span> drob=2); <span class="cm">//<span class="sq">отправка</span> <span class="sq">числа</span> в <span class="sq">дисплей</span> <span class="sq">по</span> <span class="sq">умолчанию</span> 2 <span class="sq">значения</span> <span class="sq">после</span> <span class="sq">запятой</span></span><br>    <span class="kw">void</span> <span class="fn">cls</span> (<span class="kw">void</span>); <span class="cm">//<span class="sq">отчистка</span> <span class="sq">дисплея</span></span><br>    <span class="kw">void</span> <span class="fn">home</span> (<span class="kw">void</span>); <span class="cm">//<span class="sq">курсор</span> в <span class="sq">начальние</span> <span class="sq">положение</span></span></div></div><svg class="a" style="left:454px;top:108px" width="9" height="9" viewBox="0 0 9 9"><circle cx="4.5" cy="4.5" r="4" fill="#dfe8f5" stroke="#8a9ab8"/><path d="M2 4.5h5M4.5 2v5" stroke="#1a2a4a" stroke-width="1.4"/></svg><svg class="a" style="left:454px;top:273px" width="9" height="9" viewBox="0 0 9 9"><circle cx="4.5" cy="4.5" r="4" fill="#fff" stroke="#a8b4c8"/><path d="M2 4.5h5" stroke="#8a9ab8" stroke-width="1.2"/></svg><div class="a" style="left:1366px;top:77px;width:311px;height:392px;background:#fff;border:1px solid #f9fafd;border-radius:6px 6px 4px 4px"></div><div class="a" style="left:1367px;top:78px;width:309px;height:26px;background:linear-gradient(#f6f7fb,#f0f3fa);border-radius:5px 5px 0 0"></div><div class="a" style="left:1367px;top:78px;width:89px;height:26px;background:linear-gradient(#e3e8f2,#f7f9fc 70%,#fff);border-radius:5px 8px 0 0"></div><svg class="a" style="left:1372px;top:84px" width="14" height="15" viewBox="0 0 14 15"><rect x="0.5" y="0.5" width="5" height="5" fill="#bcd8f4" stroke="#2f6fb8"/><rect x="0.5" y="9.5" width="5" height="5" fill="#bcd8f4" stroke="#2f6fb8"/><path d="M7 2.5h6M7 12.5h6M9 7.5h4" stroke="#2f6fb8"/><rect x="7" y="6" width="2" height="2" fill="#2f6fb8"/></svg><div class="t ui" style="left:1391px;top:84px;font-size:12px">Outline</div><svg class="a" style="left:1437px;top:85px" width="12" height="12" viewBox="0 0 12 12"><path d="M1.5 1.5h2l2.5 2.5l2.5 -2.5h2v2l-2.5 2.5l2.5 2.5v2h-2l-2.5 -2.5l-2.5 2.5h-2v-2l2.5 -2.5l-2.5 -2.5z" fill="#fff" stroke="#4a4a4a" stroke-width="0.95"/></svg><svg class="a" style="left:1462px;top:84px" width="14" height="14" viewBox="0 0 14 14"><circle cx="7" cy="7" r="6" fill="none" stroke="#9ccca0" stroke-width="1.3"/><circle cx="7" cy="7" r="3.6" fill="none" stroke="#9ccca0" stroke-width="1.2"/><circle cx="7" cy="7" r="1.6" fill="#7ab880"/></svg><div class="t ui" style="left:1481px;top:84px;font-size:12px;color:#8a8a8a">Build Tar...</div><svg class="a" style="left:1549px;top:84px" width="11" height="15" viewBox="0 0 11 15"><path d="M0.5 0.5h10v14l-2 -1.5l-3 1.5l-3 -1.5l-2 1.5z" fill="#e4e6f0" stroke="#9aa0b0"/><path d="M2.5 3h6M2.5 5h6M2.5 7h6M2.5 9h6" stroke="#8a90a0"/></svg><div class="t ui" style="left:1566px;top:84px;font-size:12px;color:#8a8a8a">Task List</div><div class="a" style="left:1630px;top:85px;width:11px;height:5px;border:1.5px solid #555;background:#fff"></div><div class="a" style="left:1653px;top:85px;width:11px;height:11px;border:1.5px solid #555;border-top-width:2.5px;background:#fff"></div><div class="a" style="left:1483px;top:105px;width:187px;height:22px;background:#f4f6fb"></div><svg class="a" style="left:1487px;top:108px" width="14" height="14" viewBox="0 0 14 14"><circle cx="4" cy="4" r="3" fill="#c8c8c8"/><circle cx="10" cy="6" r="3" fill="#bdbdbd"/><circle cx="5.5" cy="10" r="3.2" fill="#a8a8a8"/></svg><svg class="a" style="left:1510px;top:109px" width="14" height="14" viewBox="0 0 14 14"><rect x="0.5" y="0.5" width="10" height="10" fill="#e8f0fa" stroke="#98a8c0"/><rect x="2.5" y="2.5" width="10" height="10" fill="#f4f8fd" stroke="#6a80a0"/><path d="M4 7.5h7" stroke="#1f4f8a" stroke-width="1.5"/></svg><svg class="a" style="left:1532px;top:107px" width="16" height="17" viewBox="0 0 16 17"><path d="M3 2v12M0.5 11l2.5 3l2.5 -3" stroke="#333" fill="none"/><text x="7" y="7" font-size="8" font-weight="bold" font-family="Liberation Sans" fill="#2a8a70">a</text><text x="8" y="16" font-size="8" font-weight="bold" font-family="Liberation Sans" fill="#8a2a8a">z</text></svg><svg class="a" style="left:1556px;top:108px" width="14" height="15" viewBox="0 0 14 15"><circle cx="7" cy="7" r="5.5" fill="#4a9ad8" stroke="#2a70b0"/><path d="M1 1L13 14" stroke="#1a2a70" stroke-width="1.3"/></svg><svg class="a" style="left:1579px;top:107px" width="14" height="16" viewBox="0 0 14 16"><circle cx="5" cy="10" r="3.5" fill="#9a9a9a"/><text x="8" y="7" font-size="8" font-family="Liberation Sans" fill="#c02040">S</text><path d="M1 6L11 15" stroke="#1a2a70" stroke-width="1.3"/></svg><svg class="a" style="left:1605px;top:112px" width="8" height="8" viewBox="0 0 8 8"><circle cx="4" cy="4" r="3.8" fill="#5ab05a" stroke="#3a8a3a" stroke-width="0.8"/></svg><svg class="a" style="left:1625px;top:109px" width="14" height="14" viewBox="0 0 14 14"><path d="M4 1v13M9 1v13M1 4.5h12M1 9.5h12" stroke="#000" stroke-width="2"/><path d="M0 0L14 14" stroke="#888" stroke-width="1"/></svg><svg class="a" style="left:1656px;top:111px" width="11" height="7" viewBox="0 0 11 7"><path d="M0.5 0.5h10l-5 5z" fill="#fff" stroke="#555"/></svg><div class="a" style="left:1367px;top:127px;width:292px;height:323px;overflow:hidden"><svg class="a" style="left:33px;top:5px" width="12" height="11" viewBox="0 0 12 11"><path d="M4.5 0.5 L3 10.5 M8.5 0.5 L7 10.5 M1 3.5 H11 M0.5 7.5 H10" stroke="#3a68a8" stroke-width="2"/></svg><div class="t ui" style="left:57px;top:2px;font-size:12px;letter-spacing:-0.75px">LCD1602_LCD1602_H_<span style="color:#957d47"></span></div><svg class="a" style="left:33px;top:22px" width="11" height="10" viewBox="0 0 11 10"><path d="M0 0h5v4h-5z" fill="#2f70b8"/><path d="M6 0h5v10h-11v-5h6z" fill="#4a8ac8"/></svg><div class="t ui" style="left:57px;top:20px;font-size:12px;letter-spacing:-0.07px">stm32f1xx_hal.h<span style="color:#957d47"></span></div><svg class="a" style="left:33px;top:40px" width="11" height="10" viewBox="0 0 11 10"><path d="M0 0h5v4h-5z" fill="#2f70b8"/><path d="M6 0h5v10h-11v-5h6z" fill="#4a8ac8"/></svg><div class="t ui" style="left:57px;top:38px;font-size:12px;letter-spacing:-0.07px">i2c.h<span style="color:#957d47"></span></div><svg class="a" style="left:33px;top:58px" width="11" height="10" viewBox="0 0 11 10"><path d="M0 0h5v4h-5z" fill="#2f70b8"/><path d="M6 0h5v10h-11v-5h6z" fill="#4a8ac8"/></svg><div class="t ui" style="left:57px;top:56px;font-size:12px;letter-spacing:-0.07px">gpio.h<span style="color:#957d47"></span></div><svg class="a" style="left:33px;top:76px" width="11" height="10" viewBox="0 0 11 10"><path d="M0 0h5v4h-5z" fill="#2f70b8"/><path d="M6 0h5v10h-11v-5h6z" fill="#4a8ac8"/></svg><div class="t ui" style="left:57px;top:74px;font-size:12px;letter-spacing:-0.07px">cmath<span style="color:#957d47"></span></div><svg class="a" style="left:14px;top:97px" width="7" height="7" viewBox="0 0 7 7"><path d="M6 0 L6 6 L0 6z" fill="#404040"/></svg><svg class="a" style="left:32px;top:92px" width="13" height="13" viewBox="0 0 13 13"><circle cx="6.5" cy="6.5" r="6" fill="#3a9a4a" stroke="#1f6a2a"/><text x="2.3" y="10.5" font-size="10" font-weight="bold" font-family="Liberation Sans" fill="#fff">C</text></svg><div class="t ui" style="left:57px;top:92px;font-size:12px;letter-spacing:-0.07px">lcd1602<span style="color:#957d47"></span></div><svg class="a" style="left:58px;top:113px" width="9" height="9" viewBox="0 0 9 9"><circle cx="4.5" cy="4.5" r="4" fill="#6ab86a" stroke="#3a8a3a" stroke-width="0.9"/></svg><div class="t ui" style="left:82px;top:110px;font-size:12px;letter-spacing:-0.07px">lcd1602(uint8_t, uint8_t, uint16_t, I2C_HandleTypeDef)<span style="color:#957d47"></span></div><svg class="a" style="left:58px;top:131px" width="9" height="9" viewBox="0 0 9 9"><circle cx="4.5" cy="4.5" r="4" fill="#6ab86a" stroke="#3a8a3a" stroke-width="0.9"/></svg><div class="t ui" style="left:82px;top:128px;font-size:12px;letter-spacing:-0.07px">setLcd(uint8_t, uint8_t, uint16_t, I2C_HandleTypeDef)<span style="color:#957d47"> : void</span></div><svg class="a" style="left:58px;top:149px" width="9" height="9" viewBox="0 0 9 9"><circle cx="4.5" cy="4.5" r="4" fill="#6ab86a" stroke="#3a8a3a" stroke-width="0.9"/></svg><div class="t ui" style="left:82px;top:146px;font-size:12px;letter-spacing:-0.07px">init(void)<span style="color:#957d47"> : void</span></div><svg class="a" style="left:58px;top:167px" width="9" height="9" viewBox="0 0 9 9"><circle cx="4.5" cy="4.5" r="4" fill="#6ab86a" stroke="#3a8a3a" stroke-width="0.9"/></svg><div class="t ui" style="left:82px;top:164px;font-size:12px;letter-spacing:-0.07px">lcdwrtxt(unsigned char*)<span style="color:#957d47"> : void</span></div><svg class="a" style="left:58px;top:185px" width="9" height="9" viewBox="0 0 9 9"><circle cx="4.5" cy="4.5" r="4" fill="#6ab86a" stroke="#3a8a3a" stroke-width="0.9"/></svg><div class="t ui" style="left:82px;top:182px;font-size:12px;letter-spacing:-0.07px">lcdwrtxt(int)<span style="color:#957d47"> : void</span></div><svg class="a" style="left:58px;top:203px" width="9" height="9" viewBox="0 0 9 9"><circle cx="4.5" cy="4.5" r="4" fill="#6ab86a" stroke="#3a8a3a" stroke-width="0.9"/></svg><div class="t ui" style="left:82px;top:200px;font-size:12px;letter-spacing:-0.07px">lcdwrtxt(int16_t)<span style="color:#957d47"> : void</span></div><svg class="a" style="left:58px;top:221px" width="9" height="9" viewBox="0 0 9 9"><circle cx="4.5" cy="4.5" r="4" fill="#6ab86a" stroke="#3a8a3a" stroke-width="0.9"/></svg><div class="t ui" style="left:82px;top:218px;font-size:12px;letter-spacing:-0.07px">lcdwrtxt(int8_t)<span style="color:#957d47"> : void</span></div><svg class="a" style="left:58px;top:239px" width="9" height="9" viewBox="0 0 9 9"><circle cx="4.5" cy="4.5" r="4" fill="#6ab86a" stroke="#3a8a3a" stroke-width="0.9"/></svg><div class="t ui" style="left:82px;top:236px;font-size:12px;letter-spacing:-0.07px">lcdwrtxt(float, uint8_t=2)<span style="color:#957d47"> : void</span></div><svg class="a" style="left:58px;top:257px" width="9" height="9" viewBox="0 0 9 9"><circle cx="4.5" cy="4.5" r="4" fill="#6ab86a" stroke="#3a8a3a" stroke-width="0.9"/></svg><div class="t ui" style="left:82px;top:254px;font-size:12px;letter-spacing:-0.07px">cls(void)<span style="color:#957d47"> : void</span></div><svg class="a" style="left:58px;top:275px" width="9" height="9" viewBox="0 0 9 9"><circle cx="4.5" cy="4.5" r="4" fill="#6ab86a" stroke="#3a8a3a" stroke-width="0.9"/></svg><div class="t ui" style="left:82px;top:272px;font-size:12px;letter-spacing:-0.07px">home(void)<span style="color:#957d47"> : void</span></div><svg class="a" style="left:58px;top:293px" width="9" height="9" viewBox="0 0 9 9"><circle cx="4.5" cy="4.5" r="4" fill="#6ab86a" stroke="#3a8a3a" stroke-width="0.9"/></svg><div class="t ui" style="left:82px;top:290px;font-size:12px;letter-spacing:-0.07px">setCur(uint8_t, uint8_t)<span style="color:#957d47"> : void</span></div><svg class="a" style="left:58px;top:311px" width="9" height="9" viewBox="0 0 9 9"><circle cx="4.5" cy="4.5" r="4" fill="#6ab86a" stroke="#3a8a3a" stroke-width="0.9"/></svg><div class="t ui" style="left:82px;top:308px;font-size:12px;letter-spacing:-0.07px">createChar(uint8_t, uint8_t*)<span style="color:#957d47"> : void</span></div></div><div class="sbv" style="left:1659px;top:127px;height:323px"></div><svg class="a" style="left:1663px;top:133px" width="7" height="4" viewBox="0 0 7 4"><path d="M0 4h7l-3.5 -4z" fill="#333"/></svg><svg class="a" style="left:1663px;top:438px" width="7" height="4" viewBox="0 0 7 4"><path d="M0 0h7l-3.5 4z" fill="#333"/></svg><div class="thumbv" style="left:1659px;top:145px;height:173px"></div><svg class="a" style="left:1663px;top:228px" width="7" height="6" viewBox="0 0 7 6"><path d="M0 0.5h7M0 2.5h7M0 4.5h7" stroke="#555"/></svg><div class="sbh" style="left:1369px;top:450px;width:290px"></div><svg class="a" style="left:1375px;top:453px" width="4" height="8" viewBox="0 0 4 8"><path d="M4 0v8l-4 -4z" fill="#444"/></svg><svg class="a" style="left:1649px;top:453px" width="4" height="8" viewBox="0 0 4 8"><path d="M0 0v8l4 -4z" fill="#444"/></svg><div class="thumbh" style="left:1388px;top:450px;width:185px"></div><svg class="a" style="left:1477px;top:454px" width="6" height="7" viewBox="0 0 6 7"><path d="M0.5 0v7M2.5 0v7M4.5 0v7" stroke="#555"/></svg><div class="a" style="left:1659px;top:450px;width:16px;height:16px;background:#f0f0f0"></div><div class="a" style="left:425px;top:473px;width:1252px;height:509px;background:#fff;border:1px solid #f9fafd;border-radius:6px 6px 4px 4px"></div><div class="a" style="left:426px;top:474px;width:1250px;height:25px;background:linear-gradient(#f6f7fb,#f0f3fa);border-radius:5px 5px 0 0"></div><div class="a" style="left:565px;top:474px;width:94px;height:25px;background:linear-gradient(#e3e8f2,#f7f9fc 70%,#fff);border-radius:6px 8px 0 0"></div><svg class="a" style="left:430px;top:479px" width="14" height="16" viewBox="0 0 14 16"><rect x="0.5" y="8.5" width="6" height="6" fill="#f0a0a0" stroke="#e08a8a"/><path d="M2 10l3 3M5 10l-3 3" stroke="#fff"/><circle cx="4" cy="4.5" r="2.5" fill="#f08a9a"/><rect x="0.5" y="0.5" width="6" height="8" fill="none" stroke="#c8c8c8"/><path d="M8.5 0.5h4v3l-1.5 2v8h2v1h-5" fill="none" stroke="#b8c4d0"/></svg><div class="t ui" style="left:450px;top:480px;font-size:12px;color:#8a8a8a">Problems</div><svg class="a" style="left:510px;top:479px" width="16" height="16" viewBox="0 0 16 16"><rect x="3.5" y="2.5" width="11" height="13" fill="#f4eee0" stroke="#c0b8a0"/><rect x="6" y="0.5" width="6" height="3" fill="#ddd" stroke="#aaa"/><path d="M8 6h5M8 9h5M8 12h5" stroke="#a8a8b8"/><path d="M0.5 10l2.5 3l4 -6" stroke="#5a9ad8" stroke-width="1.6" fill="none"/></svg><div class="t ui" style="left:531px;top:480px;font-size:12px;color:#8a8a8a">Tasks</div><svg class="a" style="left:571px;top:480px" width="14" height="14" viewBox="0 0 14 14"><rect x="0.5" y="0.5" width="13" height="10" rx="1" fill="#fff" stroke="#2f5f9f" stroke-width="1.2"/><rect x="2" y="2" width="10" height="7" fill="#e8f0fa"/><path d="M3.5 4.5h5M3.5 6.5h6" stroke="#2f5f9f"/><path d="M4 12.5h6M2 13.5h10" stroke="#2f5f9f" stroke-width="1.2"/></svg><div class="t ui" style="left:589px;top:480px;font-size:12px">Console</div><svg class="a" style="left:639px;top:481px" width="12" height="12" viewBox="0 0 12 12"><path d="M1.5 1.5h2l2.5 2.5l2.5 -2.5h2v2l-2.5 2.5l2.5 2.5v2h-2l-2.5 -2.5l-2.5 2.5h-2v-2l2.5 -2.5l-2.5 -2.5z" fill="#fff" stroke="#4a4a4a" stroke-width="0.95"/></svg><svg class="a" style="left:663px;top:479px" width="14" height="14" viewBox="0 0 14 14"><rect x="0.5" y="0.5" width="13" height="13" fill="#fff" stroke="#a8b0c0"/><path d="M0.5 3.5h13M4.5 3.5v10M0.5 6.5h13M0.5 9.5h13" stroke="#b8c0d0"/></svg><div class="t ui" style="left:683px;top:480px;font-size:12px;color:#8a8a8a">Properties</div><svg class="a" style="left:747px;top:479px" width="15" height="15" viewBox="0 0 15 15"><rect x="0.5" y="0.5" width="12" height="10" fill="#dfe8f4" stroke="#6a8ab8"/><path d="M3 4h4M5 2v4M3 8h6" stroke="#6a7aa0"/><ellipse cx="10" cy="11" rx="3.5" ry="3.5" fill="#8ac890" stroke="#5a9a60"/></svg><div class="t ui" style="left:765px;top:480px;font-size:12px;color:#8a8a8a">Debugger Console</div><svg class="a" style="left:1352px;top:479px" width="14" height="15" viewBox="0 0 14 15"><path d="M7 14 L13 8 H9.5 V1 H4.5 V8 H1z" fill="#ffd860" stroke="#c89a20"/></svg><svg class="a" style="left:1375px;top:479px" width="14" height="15" viewBox="0 0 14 15"><path d="M7 1 L13 7 H9.5 V14 H4.5 V7 H1z" fill="#ffd860" stroke="#c89a20"/></svg><div class="a" style="left:1394px;top:476px;width:23px;height:20px;border:1px solid #707880;border-radius:3px;background:linear-gradient(#e0e4ea,#cdd3dc)"></div><svg class="a" style="left:1398px;top:478px" width="16" height="16" viewBox="0 0 16 16"><path d="M1 5 L5 1 V3.5 H11 V6.5 H5 V9z" fill="#ffe080" stroke="#c09020"/><path d="M15 11 L11 7 V9.5 H4 V12.5 H11 V15z" fill="#ffe080" stroke="#c09020"/></svg><div class="a" style="left:1419px;top:478px;width:1px;height:18px;background:#8f97a6"></div><svg class="a" style="left:1429px;top:479px" width="15" height="15" viewBox="0 0 15 15"><rect x="0.5" y="0.5" width="9" height="14" fill="#e8eef6" stroke="#98a8c0"/><rect x="10.5" y="0.5" width="4" height="14" fill="#e8eef6" stroke="#98a8c0"/><path d="M11.5 4h2M11.5 9h2" stroke="#555"/><rect x="1" y="9" width="5" height="5" fill="#a8b8d0"/></svg><svg class="a" style="left:1451px;top:479px" width="15" height="15" viewBox="0 0 15 15"><rect x="0.5" y="0.5" width="9" height="14" fill="#e8eef6" stroke="#98a8c0"/><rect x="10.5" y="0.5" width="4" height="14" fill="#e8eef6" stroke="#98a8c0"/><path d="M11.5 4h2M11.5 9h2" stroke="#555"/><rect x="1.5" y="9" width="6" height="5" fill="#f0c040" stroke="#b08020"/><path d="M3 9v-2a1.5 1.5 0 0 1 3 0v2" stroke="#b08020" fill="none"/></svg><svg class="a" style="left:1476px;top:481px" width="12" height="9" viewBox="0 0 12 9"><path d="M0 1.5h12M0 4.5h8M0 7.5h12" stroke="#c0c8d4"/></svg><svg class="a" style="left:1498px;top:479px" width="15" height="15" viewBox="0 0 15 15"><path d="M0.5 0.5h8l3 3v10h-11z" fill="#f4f6fa" stroke="#98a0b0"/><path d="M2 4h6M2 6h6M2 8h6M2 10h4" stroke="#8a9ab8"/><path d="M9 9l5 5M14 9l-5 5" stroke="#6a6a6a" stroke-width="1.8"/></svg><div class="a" style="left:1519px;top:478px;width:1px;height:18px;background:#8f97a6"></div><svg class="a" style="left:1530px;top:479px" width="15" height="15" viewBox="0 0 15 15"><rect x="0.5" y="3.5" width="13" height="11" fill="#dfeaf6" stroke="#6a8ab8"/><rect x="0.5" y="3.5" width="13" height="3" fill="#4a8ad8"/><path d="M7 10 L11 6" stroke="#3a8a3a" stroke-width="1.4"/><circle cx="12" cy="3.5" r="2.8" fill="#3aa050"/></svg><svg class="a" style="left:1553px;top:479px" width="14" height="14" viewBox="0 0 14 14"><rect x="0.5" y="0.5" width="13" height="10" rx="1" fill="#fff" stroke="#2f5f9f" stroke-width="1.2"/><rect x="2" y="2" width="10" height="7" fill="#e8f0fa"/><path d="M3.5 4.5h5M3.5 6.5h6" stroke="#2f5f9f"/><path d="M4 12.5h6M2 13.5h10" stroke="#2f5f9f" stroke-width="1.2"/></svg><svg class="a" style="left:1575px;top:485px" width="7" height="4" viewBox="0 0 7 4"><path d="M0 0h7l-3.5 4z" fill="#1a1a1a"/></svg><svg class="a" style="left:1590px;top:478px" width="16" height="16" viewBox="0 0 16 16"><rect x="0.5" y="3.5" width="12" height="11" fill="#fff8d8" stroke="#b8a060"/><rect x="0.5" y="3.5" width="12" height="2.5" fill="#6a9ad8"/><path d="M12 0 l1.2 2.8 l2.8 1.2 l-2.8 1.2 l-1.2 2.8 l-1.2 -2.8 l-2.8 -1.2 l2.8 -1.2z" fill="#ffe27a" stroke="#c79a20" stroke-width="0.8"/></svg><svg class="a" style="left:1612px;top:485px" width="7" height="4" viewBox="0 0 7 4"><path d="M0 0h7l-3.5 4z" fill="#1a1a1a"/></svg><div class="a" style="left:1630px;top:481px;width:11px;height:5px;border:1.5px solid #555;background:#fff"></div><div class="a" style="left:1653px;top:481px;width:11px;height:11px;border:1.5px solid #555;border-top-width:2.5px;background:#fff"></div><div class="t ui" style="left:428px;top:501.5px;font-size:12px;letter-spacing:-0.35px">CDT Build Console [I2C_LCD_V2]</div><div class="a" style="left:428px;top:516px;width:1230px;height:1px;background:#a0a0a0"></div><div class="a" style="left:426px;top:517px;width:1232px;height:444px;overflow:hidden"><div class="a mono" style="left:4px;top:-4.5px;font-size:12.4px;letter-spacing:-0.44px;line-height:15px">Finished building: C:/C++/Progekt2_1/I2C_LCD_V2/Src/stm32f1xx_hal_msp.c<br><br>Building file: C:/C++/Progekt2_1/I2C_LCD_V2/Src/stm32f1xx_it.c<br>Invoking: MCU GCC Compiler<br>C:\C++\Progekt2_1\I2C_LCD_V2\SW4STM32\I2C_LCD_V2\Debug<br>arm-none-eabi-gcc -mcpu=cortex-m3 -mthumb -mfloat-abi=soft '-D__weak=__attribute__((weak))' '-D__packed=__attribute__((__packed__))' -DUSE_HAL_DRIVER -DSTM32F103xB -I"C:/C++/Progekt2_1/I2C_LCD_V2/Inc"<br>Finished building: C:/C++/Progekt2_1/I2C_LCD_V2/Src/stm32f1xx_it.c<br><br>Building file: C:/C++/Progekt2_1/I2C_LCD_V2/Drivers/CMSIS/Device/ST/STM32F1xx/Source/Templates/gcc/startup_stm32f103xb.s<br>Invoking: MCU GCC Assembler<br>C:\C++\Progekt2_1\I2C_LCD_V2\SW4STM32\I2C_LCD_V2\Debug<br>arm-none-eabi-as -mcpu=cortex-m3 -mthumb -mfloat-abi=soft -I"C:/C++/Progekt2_1/I2C_LCD_V2/SW4STM32/I2C_LCD_V2/lcd1602" -g -o "Application/SW4STM32/startup_stm32f103xb.o" "C:/C++/Progekt2_1"<br>Finished building: C:/C++/Progekt2_1/I2C_LCD_V2/Drivers/CMSIS/Device/ST/STM32F1xx/Source/Templates/gcc/startup_stm32f103xb.s<br><br>Building target: I2C_LCD_V2.elf<br>Invoking: MCU G++ Linker<br>arm-none-eabi-g++ -mcpu=cortex-m3 -mthumb -mfloat-abi=soft -specs=nosys.specs -specs=nano.specs -T"../STM32F103C8Tx_FLASH.ld" -Wl,-Map=output.map -Wl,--gc-sections -fno-exceptions -fno-rtti<br>Finished building target: I2C_LCD_V2.elf<br><br>make --no-print-directory post-build<br>Generating binary and Printing size information:<br>arm-none-eabi-objcopy -O binary "I2C_LCD_V2.elf" "I2C_LCD_V2.bin"<br>arm-none-eabi-size "I2C_LCD_V2.elf"<br>   text    data     bss     dec     hex filename<br>  11272      12    1692   12976    32b0 I2C_LCD_V2.elf<br><br><br><span style="color:#2828c0">18:29:07 Build Finished (took 14s.726ms)</span></div></div><div class="sbv" style="left:1659px;top:517px;height:444px"></div><svg class="a" style="left:1663px;top:525px" width="7" height="4" viewBox="0 0 7 4"><path d="M0 4h7l-3.5 -4z" fill="#333"/></svg><svg class="a" style="left:1663px;top:950px" width="7" height="4" viewBox="0 0 7 4"><path d="M0 0h7l-3.5 4z" fill="#333"/></svg><div class="thumbv" style="left:1659px;top:865px;height:78px"></div><svg class="a" style="left:1663px;top:901px" width="7" height="6" viewBox="0 0 7 6"><path d="M0 0.5h7M0 2.5h7M0 4.5h7" stroke="#555"/></svg><div class="sbh" style="left:428px;top:961px;width:1231px"></div><svg class="a" style="left:434px;top:965px" width="4" height="8" viewBox="0 0 4 8"><path d="M4 0v8l-4 -4z" fill="#444"/></svg><svg class="a" style="left:1649px;top:965px" width="4" height="8" viewBox="0 0 4 8"><path d="M0 0v8l4 -4z" fill="#444"/></svg><div class="thumbh" style="left:446px;top:961px;width:236px"></div><svg class="a" style="left:560px;top:965px" width="6" height="7" viewBox="0 0 6 7"><path d="M0.5 0v7M2.5 0v7M4.5 0v7" stroke="#555"/></svg><div class="a" style="left:1659px;top:961px;width:16px;height:16px;background:#f8f8f8"></div><svg class="a" style="left:4px;top:988px" width="16" height="14"><use href="#projfolder"/></svg><div class="t ui" style="left:23px;top:989.5px;font-size:12px;letter-spacing:-0.5px">I2C_LCD_V2</div><svg class="a" style="left:1394px;top:990px" width="2" height="16" viewBox="0 0 2 16"><path d="M1 1v2M1 5v2M1 9v2M1 13v2" stroke="#8a93a6" stroke-width="1.5"/></svg><div class="a" style="left:0;top:1010px;width:1680px;height:40px;background:#a0a0a0"></div><div class="a" style="left:0;top:1011px;width:612px;height:39px;background:linear-gradient(90deg,#2a2a30 0,#3a3038 20px,#2c2430 55px,#4a3844 72px,#3a2c34 92px,#5a4452 110px,#43343e 130px,#4a3a46 160px,#3a2e38 190px,#4e3c4a 225px,#3e3440 250px,#4e3e4a 280px,#3e3440 310px,#564450 340px,#4e3e4a 360px,#3e3440 395px,#4e3e4a 430px,#463a44 470px,#3a4030 500px,#4a5838 512px,#3c4a30 525px,#5a4656 540px,#4a4048 555px,#485838 570px,#5a4858 585px,#5a5058 595px,#a0a0a0 603px)"></div><div class="a" style="left:1372px;top:1011px;width:308px;height:39px;background:linear-gradient(90deg,#a0a0a0,#505050 6px,#1c1c24 14px,#1a1c26 200px,#222028 308px)"></div><div class="a" style="left:0;top:1010px;width:1680px;height:1px;background:#1e1e22"></div><div class="a" style="left:0;top:1011px;width:1680px;height:1px;background:rgba(255,255,255,0.25)"></div><div class="a" style="left:122px;top:1012px;width:58px;height:37px;border:1px solid rgba(255,255,255,0.55);box-shadow:inset 0 0 0 1px rgba(0,0,0,0.25),0 0 0 1px rgba(0,0,0,0.3);border-radius:3px;background:linear-gradient(160deg,rgba(255,255,255,0.45),rgba(255,255,255,0.22) 45%,rgba(255,255,255,0.15))"></div><div class="a" style="left:246px;top:1012px;width:53px;height:37px;border:1px solid rgba(255,255,255,0.55);box-shadow:inset 0 0 0 1px rgba(0,0,0,0.25),0 0 0 1px rgba(0,0,0,0.3);border-radius:3px;background:linear-gradient(160deg,rgba(255,255,255,0.45),rgba(255,255,255,0.22) 45%,rgba(255,255,255,0.15))"></div><div class="a" style="left:301px;top:1012px;width:3px;height:37px;border:1px solid rgba(255,255,255,0.35);border-left:none;border-radius:0 3px 3px 0"></div><div class="a" style="left:370px;top:1012px;width:58px;height:37px;border:1px solid rgba(255,255,255,0.55);box-shadow:inset 0 0 0 1px rgba(0,0,0,0.25),0 0 0 1px rgba(0,0,0,0.3);border-radius:3px;background:linear-gradient(160deg,rgba(255,255,255,0.8),rgba(235,230,232,0.6) 45%,rgba(200,195,198,0.55))"></div><div class="a" style="left:432px;top:1012px;width:58px;height:37px;border:1px solid rgba(255,255,255,0.55);box-shadow:inset 0 0 0 1px rgba(0,0,0,0.25),0 0 0 1px rgba(0,0,0,0.3);border-radius:3px;background:linear-gradient(160deg,rgba(255,255,255,0.45),rgba(255,255,255,0.22) 45%,rgba(255,255,255,0.15))"></div><svg class="a" style="left:8px;top:1012px" width="38" height="37" viewBox="0 0 38 37"><defs><radialGradient id="orb" cx="0.5" cy="0.35" r="0.65"><stop offset="0" stop-color="#9fd6f4"/><stop offset="0.5" stop-color="#2a7ab8"/><stop offset="1" stop-color="#0a2a50"/></radialGradient></defs><circle cx="19" cy="18" r="18" fill="url(#orb)" stroke="#6a9ac0" stroke-width="1"/><path d="M9 10 q5 -2 9 1 v7 q-4 -3 -9 -1z" fill="#f05a28"/><path d="M20 11 q5 3 10 0 v7 q-5 3 -10 0z" fill="#7ab828"/><path d="M9 19 q5 -2 9 1 v7 q-4 -3 -9 -1z" fill="#2a9ae0"/><path d="M20 20 q5 3 10 0 v7 q-5 3 -10 0z" fill="#f8c020"/><ellipse cx="19" cy="9" rx="12" ry="6" fill="rgba(255,255,255,0.25)"/></svg><svg class="a" style="left:73px;top:1014px" width="33" height="32" viewBox="0 0 33 32"><circle cx="16" cy="17" r="11" fill="#2a8ae0"/><circle cx="16" cy="17" r="6" fill="#0a3a80"/><path d="M8 17h16" stroke="#cfe8ff" stroke-width="3"/><path d="M22 13 a6 6 0 1 0 1 6" stroke="#bfe0ff" stroke-width="3.5" fill="none"/><ellipse cx="17" cy="15" rx="16" ry="6" transform="rotate(-35 17 15)" fill="none" stroke="#e8b020" stroke-width="2.2"/></svg><svg class="a" style="left:135px;top:1017px" width="32" height="30" viewBox="0 0 32 30"><path d="M1 4h10l2 2h18v22h-30z" fill="#f0d070" stroke="#b89040"/><rect x="3" y="1" width="4" height="3" fill="#30b040"/><rect x="13" y="3" width="4" height="3" fill="#d03020"/><rect x="22" y="5" width="4" height="3" fill="#3a8ad8"/><path d="M1 9h30v19h-30z" fill="#f8e098"/><path d="M4 17h24v12h-6v-7h-12v7h-6z" fill="#8ac8f0" stroke="#3a8ad0"/></svg><svg class="a" style="left:199px;top:1019px" width="27" height="25" viewBox="0 0 27 25"><rect x="2" y="0" width="24" height="24" fill="#c0dcf0" stroke="#7aa8d0"/><rect x="0" y="1" width="23" height="23" fill="#a8d0f0" stroke="#6a9ac8"/><circle cx="11.5" cy="12.5" r="8" fill="#f07820" stroke="#fff" stroke-width="1.5"/><path d="M9 8.5l6.5 4l-6.5 4z" fill="#fff"/></svg><svg class="a" style="left:257px;top:1015px" width="30" height="30" viewBox="0 0 30 30"><circle cx="15" cy="15" r="14.5" fill="#db4437"/><path d="M15 15 L27.6 22.3 A14.5 14.5 0 0 1 2.4 22.3z" fill="#0f9d58"/><path d="M15 15 L27.6 22.3 A14.5 14.5 0 0 1 15 29.5z" fill="#fbc02d"/><path d="M15 15 L2.4 22.3 A14.5 14.5 0 0 1 2.4 7.7z" fill="#0f9d58"/><path d="M15 15 L29.5 15 A14.5 14.5 0 0 1 22 27.6z" fill="#fbc02d"/><circle cx="15" cy="15" r="6.5" fill="#fff"/><circle cx="15" cy="15" r="5" fill="#4285f4"/></svg><svg class="a" style="left:322px;top:1015px" width="31" height="30" viewBox="0 0 31 30"><circle cx="15" cy="15" r="14" fill="#e66000"/><circle cx="16" cy="13" r="10" fill="#1a5a9a"/><circle cx="17" cy="11" r="6" fill="#3aa0e0"/><path d="M2 12 q2 10 12 16 q10 2 15 -10 q-3 8 -11 7 q-8 -2 -9 -10 q-4 4 -7 -3z" fill="#f08a10"/><path d="M4 6 q4 -4 8 0 q-4 2 -8 0z" fill="#f8b030"/></svg><svg class="a" style="left:383px;top:1015px" width="32" height="30" viewBox="0 0 32 30"><circle cx="15" cy="15" r="14.5" fill="#f09a20"/><circle cx="17" cy="15" r="14" fill="#2c2260"/><path d="M3.5 12h27M3.2 15.2h27.6M3.5 18.4h27" stroke="#fff" stroke-width="2.2"/><path d="M5 22 a14 14 0 0 0 24 0" fill="#3a2a80"/></svg><svg class="a" style="left:445px;top:1016px" width="31" height="31" viewBox="0 0 31 31"><path d="M8 4 L26 4 L28 26 L12 30z" fill="#e8f4f8" stroke="#9ab"/><path d="M3 24 L14 4 L26 6 L16 28z" fill="#5ab8d0" stroke="#2a8aa8"/><path d="M14 4 L26 6 L22 12z" fill="#8ad0e8"/><path d="M10 3h16" stroke="#666" stroke-dasharray="1 1" stroke-width="2"/></svg><div class="t" style="left:1466px;top:1021px;font-size:12px;color:#f2f2f2;letter-spacing:-0.3px">EN</div><svg class="a" style="left:1497px;top:1031px" width="9" height="4" viewBox="0 0 9 4"><path d="M0 4 L4.5 0 L9 4z" fill="#f0f0f0"/></svg><svg class="a" style="left:1520px;top:1026px" width="13" height="13" viewBox="0 0 13 13"><path d="M0.5 4h3l4 -3.5v12l-4 -3.5h-3z" fill="#f4f4f4" stroke="#ccc"/><path d="M10 3 q2 3 0 6" stroke="#ddd" fill="none"/></svg><svg class="a" style="left:1542px;top:1024px" width="17" height="17" viewBox="0 0 17 17"><path d="M1 0v16" stroke="#f0f0f0" stroke-width="1.5"/><path d="M2 1h7l1 2h5v6h-6l-1 -2h-6z" fill="#f0f0f0"/><circle cx="11.5" cy="11.5" r="4.5" fill="#e02020" stroke="#fff"/><path d="M9.5 9.5l4 4M13.5 9.5l-4 4" stroke="#fff" stroke-width="1.2"/></svg><svg class="a" style="left:1566px;top:1024px" width="16" height="15" viewBox="0 0 16 15"><path d="M1 0v4h4v-4M3 4v11h6" stroke="#f0f0f0" stroke-width="1.2" fill="none"/><rect x="5.5" y="3.5" width="9" height="7" fill="#222" stroke="#f0f0f0"/><path d="M8 13h5" stroke="#f0f0f0"/></svg><div class="t" style="left:1613px;top:1016px;font-size:12.3px;color:#f4f4f4;transform:scaleX(0.88);transform-origin:0 0">18:29</div><div class="t" style="left:1600px;top:1033px;font-size:12.3px;color:#f4f4f4;transform:scaleX(0.88);transform-origin:0 0">10.06.2017</div><div class="a" style="left:1666px;top:1012px;width:14px;height:38px;border:1px solid #6a6a70;border-right:none;background:linear-gradient(135deg,#5a5a60,#2a2a30 60%,#303036)"></div></body></html>
